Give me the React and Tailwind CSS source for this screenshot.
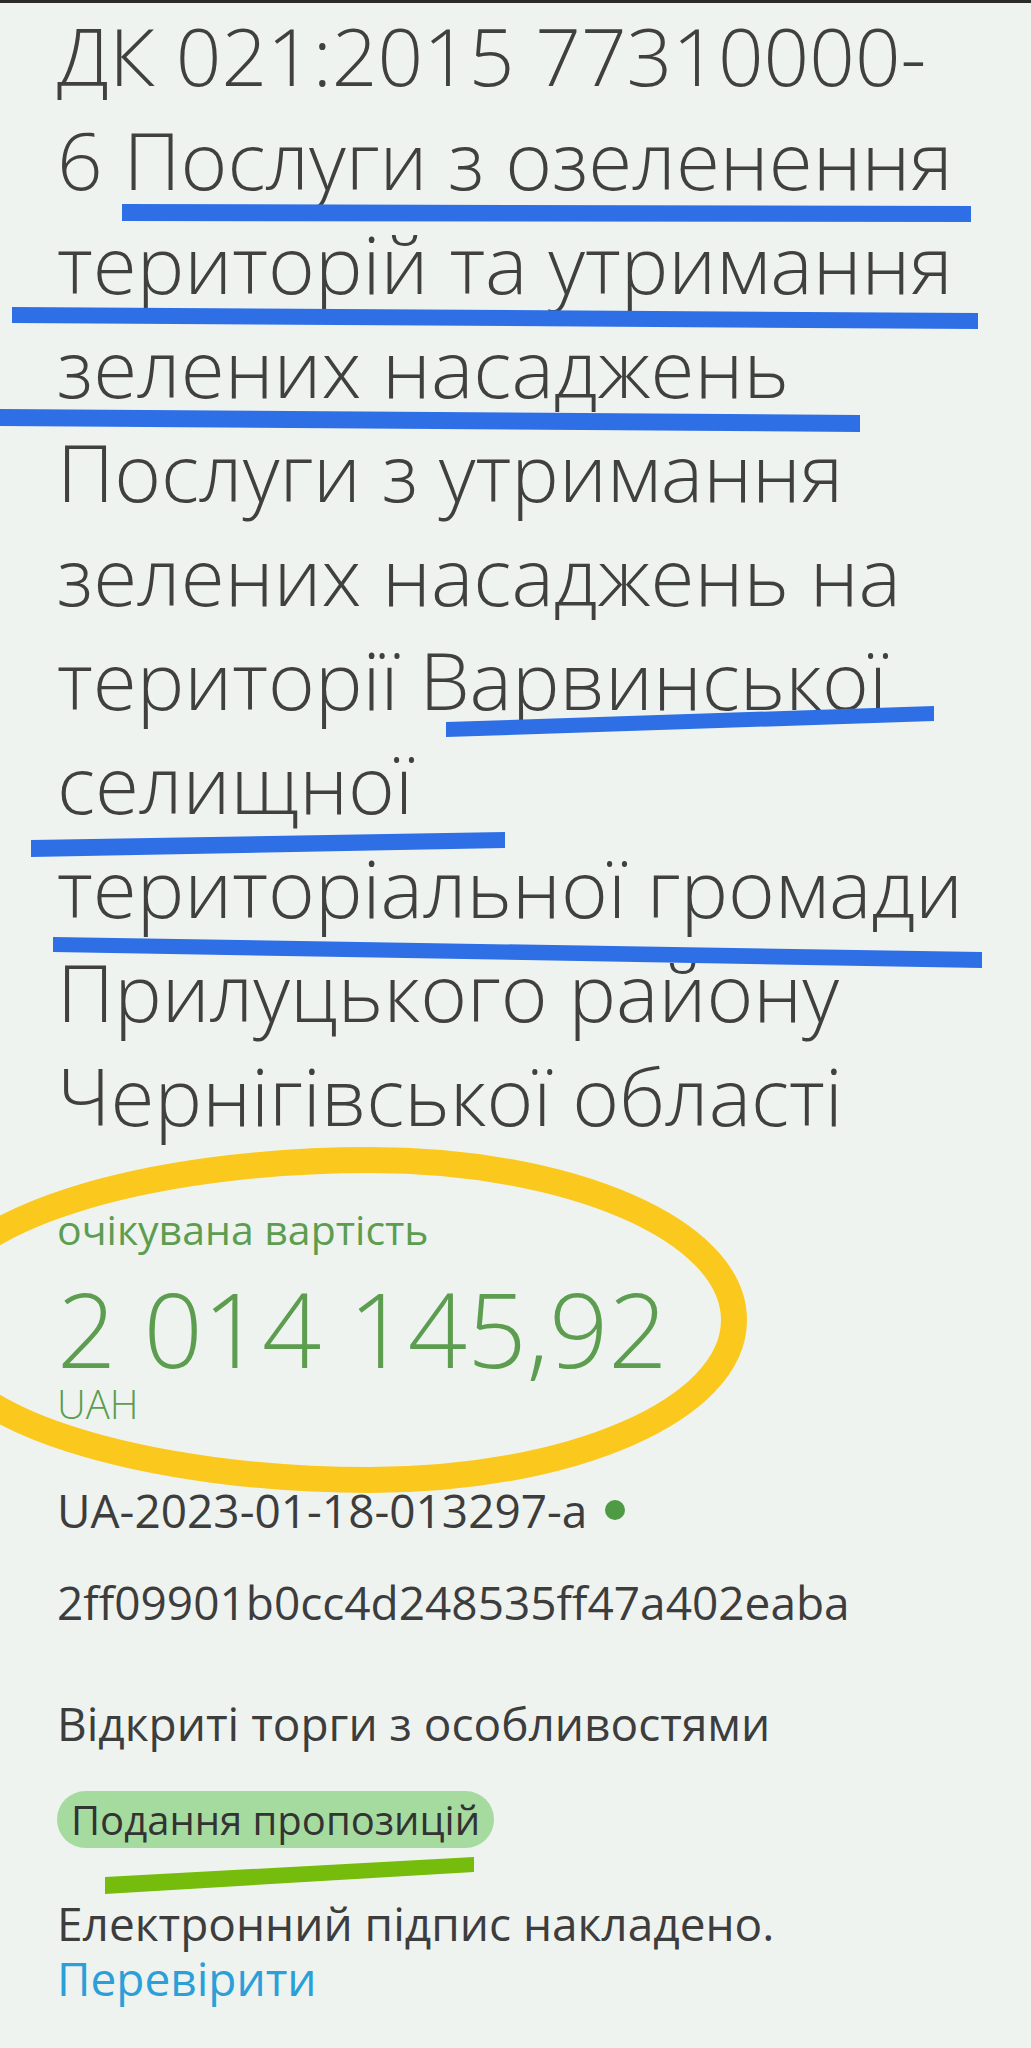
import React from 'react'

// title broken the way the phone screen wraps it
const TITLE_LINES = [
  'ДК 021:2015 77310000-',
  '6 Послуги з озеленення',
  'територій та утримання',
  'зелених насаджень',
  'Послуги з утримання',
  'зелених насаджень на',
  'території Варвинської',
  'селищної',
  'територіальної громади',
  'Прилуцького району',
  'Чернігівської області',
]

// hand-drawn marks that sit on top of the screenshot
const BLUE_MARKS = [
  '122,204 971,206 971,222 122,221',
  '12,307 978,313 978,329 12,323',
  '0,409 860,415 860,432 0,426',
  '446,722 934,706 934,721 446,737',
  '31,840 505,832 505,848 31,857',
  '53,937 982,952 982,968 53,952',
]

const RING =
  'M -70 1320 C -70 1215, 160 1160, 370 1160 C 570 1160, 734 1230, 734 1320 C 734 1410, 570 1480, 370 1480 C 160 1480, -70 1425, -70 1320 Z'

function Marks() {
  return (
    <svg
      className="pointer-events-none absolute left-0 top-0"
      width="1031"
      height="2048"
      viewBox="0 0 1031 2048"
    >
      {BLUE_MARKS.map((points) => (
        <polygon key={points} points={points} fill="#2f6fe6" />
      ))}
      <path d={RING} fill="none" stroke="#fbc81d" strokeWidth="26" />
      <polygon points="105,1877 474,1857 474,1872 105,1894" fill="#76bc0c" />
    </svg>
  )
}

export default function App() {
  return (
    <div
      className="relative min-h-[2048px] w-[1031px] overflow-hidden bg-[#eff3f0] text-[#3d3d3d]"
      style={{ fontFamily: '"Open Sans", "Noto Sans", sans-serif' }}
    >
      <div className="h-[3px] bg-[#2b2b2b]" />

      <div className="pl-[57px]">
        <h1 className="text-[80px] font-light leading-[104px] text-[#404040]">
          {TITLE_LINES.map((line) => (
            <span key={line} className="block whitespace-nowrap">
              {line}
            </span>
          ))}
        </h1>

        <p className="mt-[58px] text-[41px] leading-[48px] text-[#5c9d50]">очікувана вартість</p>
        <p className="mt-[23px] text-[104px] font-light leading-[104px] text-[#5c9d50]">2 014 145,92</p>
        <p className="mt-[4px] text-[40px] font-light leading-[40px] text-[#5c9d50]">UAH</p>

        <div className="mt-[58px] flex items-center gap-[18px] text-[46px] leading-[56px]">
          <span>UA-2023-01-18-013297-a</span>
          <span className="h-[20px] w-[20px] rounded-full bg-[#4e9a45]" />
        </div>

        <p className="mt-[36px] text-[46px] leading-[56px]">2ff09901b0cc4d248535ff47a402eaba</p>

        <p className="mt-[65px] text-[46px] leading-[56px]">Відкриті торги з особливостями</p>

        <div className="mt-[40px]">
          <span className="inline-block h-[57px] rounded-full bg-[#a6dba0] px-[14px] text-[40px] leading-[57px] text-[#333]">
            Подання пропозицій
          </span>
        </div>

        <p className="mt-[48px] text-[46px] leading-[55px]">
          Електронний підпис накладено.
          <br />
          <a href="#" className="text-[#2b9fd8]">
            Перевірити
          </a>
        </p>
      </div>

      <Marks />
    </div>
  )
}
